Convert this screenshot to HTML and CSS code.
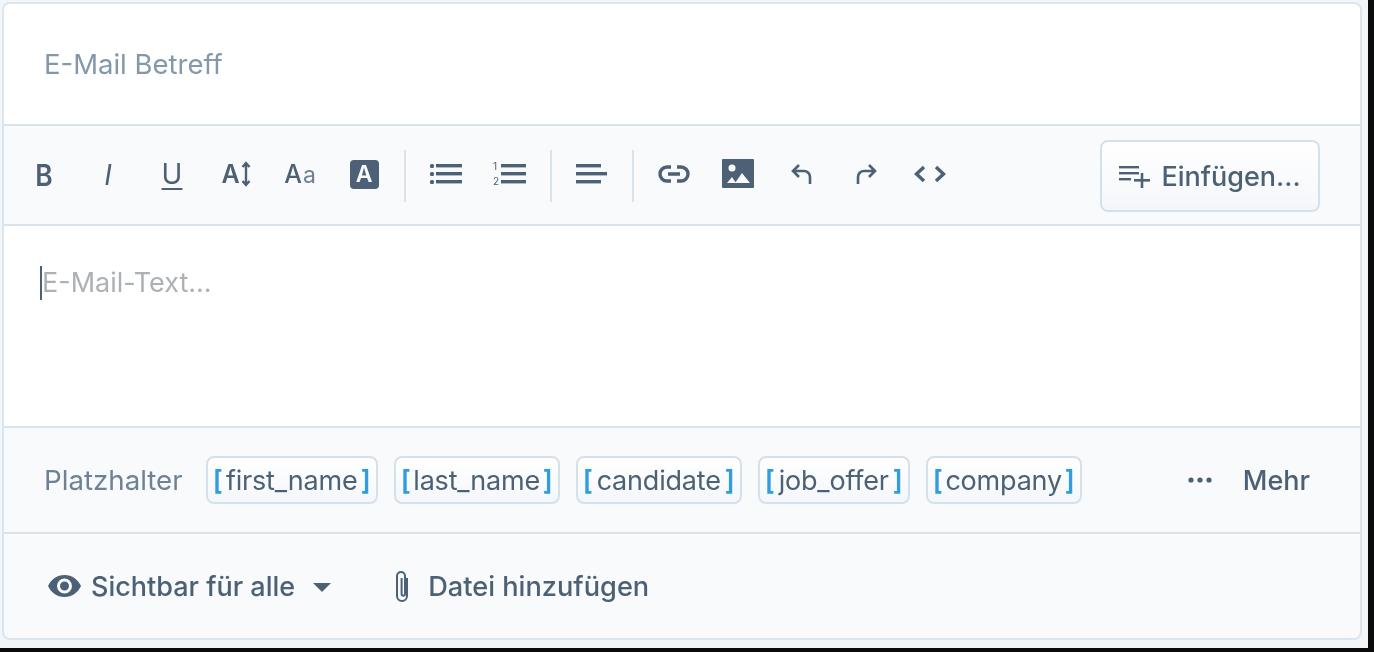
FILE: index.html
```html
<!DOCTYPE html>
<html lang="de">
<head>
<meta charset="utf-8">
<title>E-Mail</title>
<link rel="stylesheet" href="styles.css">
</head>
<body>
<div class="page">
  <div class="card">
    <div class="subject">E-Mail Betreff</div>
    <div class="toolbar">
      <div class="tool"><span class="glyph g-b">B</span></div>
      <div class="tool"><span class="glyph g-i">I</span></div>
      <div class="tool"><span class="glyph g-u">U</span></div>
      <div class="tool"><span class="glyph g-sz">A</span><svg class="sz-arrow" width="10" height="26" viewBox="0 0 10 26"><path d="M5 2v22M1.500 6 5 2l3.500 4M1.500 20 5 24l3.500-4" fill="none" stroke="#4c6076" stroke-width="2.400"/></svg></div>
      <div class="tool"><span class="glyph g-aa">A</span><span class="glyph g-aa2">a</span></div>
      <div class="tool"><span class="badge-a">A</span></div>
      <div class="sep"></div>
      <div class="tool"><svg width="34" height="24" viewBox="0 0 34 24"><g fill="#4c6076"><rect x="1" y="2" width="4" height="4" rx="1.500"/><rect x="1" y="10" width="4" height="4" rx="1.500"/><rect x="1" y="18" width="4" height="4" rx="1.500"/><rect x="7" y="2" width="26" height="3.400"/><rect x="7" y="10" width="26" height="3.400"/><rect x="7" y="18" width="26" height="3.400"/></g></svg></div>
      <div class="tool"><svg width="34" height="26" viewBox="0 0 34 26"><g fill="#4c6076"><text class="mini" x="0" y="9">1</text><text class="mini" x="0" y="24">2</text><rect x="8" y="3" width="25" height="3.400"/><rect x="8" y="11" width="25" height="3.400"/><rect x="8" y="19" width="25" height="3.400"/></g></svg></div>
      <div class="sep"></div>
      <div class="tool"><svg width="32" height="24" viewBox="0 0 32 24"><g fill="#4c6076"><rect x="0" y="2" width="25" height="3.400"/><rect x="0" y="10" width="31" height="3.400"/><rect x="0" y="18" width="25" height="3.400"/></g></svg></div>
      <div class="sep"></div>
      <div class="tool"><svg width="32" height="20" viewBox="0 0 32 20"><path d="M13 3H9a7 7 0 0 0 0 14h4M19 3h4a7 7 0 0 1 0 14h-4M10 10h12" fill="none" stroke="#4c6076" stroke-width="3.400"/></svg></div>
      <div class="tool"><svg class="lift" width="32" height="29" viewBox="0 0 32 29"><rect width="32" height="29" rx="1" fill="#4c6076"/><circle cx="10" cy="9" r="3.500" fill="#f8fafc"/><path d="M5 24l5-6 4 6zM13 24l7-10 8 10z" fill="#f8fafc"/></svg></div>
      <div class="tool"><svg width="22" height="22" viewBox="0 0 22 22"><path d="M8 2 2 8l6 6M2 8h11a6 6 0 0 1 6 6v7" fill="none" stroke="#4c6076" stroke-width="2.600"/></svg></div>
      <div class="tool"><svg width="22" height="22" viewBox="0 0 22 22"><path d="M14 2l6 6-6 6M20 8H9a6 6 0 0 0-6 6v7" fill="none" stroke="#4c6076" stroke-width="2.600"/></svg></div>
      <div class="tool"><svg width="32" height="20" viewBox="0 0 32 20"><path d="M10 3 2.500 10l7.500 7M22 3l7.500 7-7.500 7" fill="none" stroke="#4c6076" stroke-width="3.400"/></svg></div>
      <div class="insert">
        <svg width="32" height="24" viewBox="0 0 32 24"><g fill="#4c6076"><rect x="0" y="2" width="20" height="2.400"/><rect x="0" y="8" width="20" height="2.400"/><rect x="0" y="14" width="12" height="2.400"/><rect x="15" y="15" width="16" height="2.600"/><rect x="21.700" y="9" width="2.600" height="15"/></g></svg>
        <span>Einfügen...</span>
      </div>
    </div>
    <div class="body-text"><span class="cursor"></span><span>E-Mail-Text...</span></div>
    <div class="placeholders">
      <span class="ph-label">Platzhalter</span>
      <span class="tag t-first"><b>[</b>first_name<b>]</b></span>
      <span class="tag t-last"><b>[</b>last_name<b>]</b></span>
      <span class="tag t-cand"><b>[</b>candidate<b>]</b></span>
      <span class="tag t-job"><b>[</b>job_offer<b>]</b></span>
      <span class="tag t-comp"><b>[</b>company<b>]</b></span>
      <span class="more">
        <svg width="24" height="6" viewBox="0 0 24 6"><g fill="#4c6076"><circle cx="3" cy="3" r="2.600"/><circle cx="12" cy="3" r="2.600"/><circle cx="21" cy="3" r="2.600"/></g></svg>
        <span>Mehr</span>
      </span>
    </div>
    <div class="footer">
      <svg class="eye" width="33" height="22" viewBox="0 0 33 22"><path fill="#4c6076" fill-rule="evenodd" d="M16.500 0C9 0 3 4.500 0 11c3 6.500 9 11 16.500 11S30 17.500 33 11C30 4.500 24 0 16.500 0zm0 18.500a7.500 7.500 0 1 1 0-15 7.500 7.500 0 0 1 0 15zm0-12a4.500 4.500 0 1 0 0 9 4.500 4.500 0 0 0 0-9z"/></svg>
      <span class="foot-label">Sichtbar für alle</span>
      <span class="caret"></span>
      <svg class="clip" width="20" height="34" viewBox="0 0 20 34"><path d="M14.500 8v18a5 5 0 0 1-10 0V6a4 4 0 0 1 8 0v18a1.700 1.700 0 0 1-3.400 0V8" transform="translate(0.500 1)" fill="none" stroke="#4c6076" stroke-width="2"/></svg>
      <span class="foot-label foot-wide">Datei hinzufügen</span>
    </div>
  </div>
</div>
</body>
</html>
```
FILE: styles.css
```css
html, body {
  margin: 0;
  padding: 0;
  height: 100%;
  background: #0b0b0c;
  overflow: hidden;
}
body {
  font-family: Inter, "Liberation Sans", sans-serif;
  color: #4c6076;
}
.page {
  width: 1368px;
  height: 648px;
  box-sizing: border-box;
  padding: 2px 6px 8px 2px;
  background: #f3f6f9;
  filter: blur(0.6px);
}
.card {
  height: 638px;
  box-sizing: border-box;
  border: 2px solid #dbe5ed;
  border-radius: 8px;
  background: #f8fafc;
  overflow: hidden;
  display: flex;
  flex-direction: column;
}
.subject {
  height: 120px;
  flex: none;
  box-sizing: border-box;
  padding: 0 0 0 40px;
  display: flex;
  align-items: center;
  background: #fff;
  color: #8398ab;
  font-size: 27.500px;
}
.toolbar {
  height: 102px;
  flex: none;
  box-sizing: border-box;
  border-top: 2px solid #d8e3ec;
  border-bottom: 2px solid #d8e3ec;
  padding: 0 40px 0 8px;
  display: flex;
  align-items: center;
}
.tool {
  width: 64px;
  height: 52px;
  flex: none;
  display: flex;
  align-items: center;
  justify-content: center;
  margin-top: -2px;
}
.glyph {
  color: #4c6076;
  line-height: 1;
}
.g-b { display: inline-block; font-size: 30px; font-weight: 600; transform: scaleX(0.88); padding-top: 2px; }
.g-i { font-size: 28px; font-style: italic; font-weight: 400; padding-top: 2px; }
.g-u { font-size: 28px; text-decoration: underline; text-underline-offset: 4px; text-decoration-thickness: 2px; }
.g-sz { font-size: 25px; font-weight: 600; }
.g-aa { font-size: 25px; font-weight: 500; }
.g-aa2 { font-size: 23px; font-weight: 400; margin-left: 1px; color: #6d7f92; align-self: center; padding-top: 2px; }
.sz-arrow { margin-left: 1px; }
.badge-a {
  width: 29px;
  height: 29px;
  background: #4c6076;
  color: #f8fafc;
  border-radius: 4px;
  font-size: 23px;
  font-weight: 600;
  display: flex;
  align-items: center;
  justify-content: center;
}
.lift { margin-top: -2px; }
.mini {
  font-family: Inter, sans-serif;
  font-size: 10px;
}
.sep {
  width: 2px;
  height: 52px;
  flex: none;
  margin: 2px 8px 0;
  background: #d8e3ec;
}
.insert {
  margin: 2px 0 0 auto;
  width: 220px;
  height: 72px;
  flex: none;
  box-sizing: border-box;
  border: 2px solid #d5e1ea;
  border-radius: 8px;
  background: linear-gradient(#fff, #f4f7fa);
  display: flex;
  align-items: center;
  justify-content: center;
  gap: 10px;
  font-size: 27px;
  font-weight: 500;
}
.body-text {
  height: 202px;
  flex: none;
  box-sizing: border-box;
  border-bottom: 2px solid #d8e3ec;
  padding: 39px 0 0 36px;
  background: #fff;
  color: #adb1b5;
  font-size: 27px;
  line-height: 36px;
  display: flex;
  align-items: flex-start;
}
.cursor {
  width: 2px;
  height: 34px;
  margin-top: 1px;
  background: #4c6076;
}
.placeholders {
  height: 106px;
  flex: none;
  box-sizing: border-box;
  border-bottom: 2px solid #d8e3ec;
  padding: 0 50px 0 40px;
  display: flex;
  align-items: center;
  gap: 16px;
  font-size: 27px;
}
.ph-label {
  color: #6e8195;
  font-size: 27.700px;
  margin-right: 7px;
}
.tag {
  height: 48px;
  box-sizing: border-box;
  border: 2px solid #d5e1ea;
  border-radius: 8px;
  background: linear-gradient(#fff, #f4f7fa);
  padding: 0 5px;
  display: flex;
  align-items: center;
  justify-content: space-between;
  letter-spacing: -0.2px;
}
.t-first { width: 172px; }
.t-last { width: 166px; }
.t-cand { width: 166px; }
.t-job { width: 152px; }
.t-comp { width: 156px; }
.tag b {
  color: #2f9ce4;
  font-weight: 600;
}
.more {
  margin-left: auto;
  display: flex;
  align-items: center;
  gap: 31px;
  font-weight: 500;
}
.footer {
  flex: 1;
  padding: 0 0 0 44px;
  display: flex;
  align-items: center;
  font-size: 27px;
  font-weight: 500;
}
.foot-label { white-space: nowrap; }
.foot-wide { font-size: 27.200px; }
.eye { margin-right: 10px; }
.caret {
  width: 0;
  height: 0;
  margin: 3px 61px 0 18px;
  border-left: 9px solid transparent;
  border-right: 9px solid transparent;
  border-top: 9px solid #4c6076;
}
.clip { margin-right: 16px; }
```
